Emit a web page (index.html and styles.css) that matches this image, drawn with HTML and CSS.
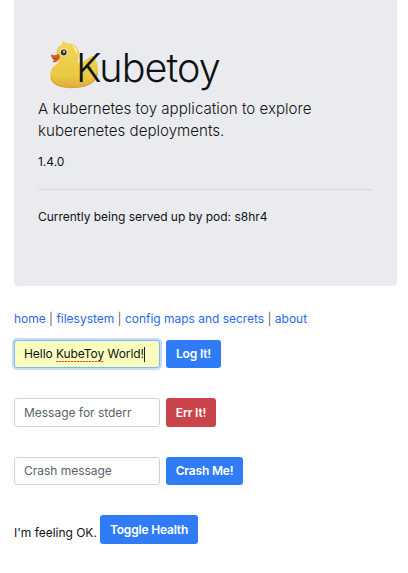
FILE: index.html
```html
<!DOCTYPE html>
<html lang="en">
<head>
<meta charset="utf-8">
<title>Kubetoy</title>
<link rel="stylesheet" href="styles.css">
</head>
<body>
<main class="container">
  <header class="jumbotron">
    <h1 class="title">
      <svg class="duck" viewBox="0 0 50 48" aria-hidden="true">
        <defs>
          <linearGradient id="body" x1="0" y1="0" x2="0" y2="1">
            <stop offset="0" stop-color="#f3d65a"/>
            <stop offset=".75" stop-color="#eac943"/>
            <stop offset="1" stop-color="#e0aa3c"/>
          </linearGradient>
        </defs>
        <path fill="url(#body)" d="M12 1c1.500-1.500 3-.5 3.500 1.500C23 1 29 6 29 13c0 4-2 6-1 9 4 2 8-5 14-7 3 0 6 7 6 14C48 41 38 47 22 47 8 47 .5 42 .5 34.500 0 28 4 24 8.500 22 5 15 5 6 12.500 3z"/>
        <path fill="none" stroke="#dda23b" stroke-width="1.300" d="M1 36c1 7.500 9 10.500 21 10.500 15 0 24-5 25.500-15"/>
        <path fill="#fff5b4" d="M22 4c4 2 6 6 5 10-1-4-3-7-5-10z"/>
        <circle cx="13.700" cy="11.500" r="3.700" fill="#faf6d5"/>
        <circle cx="13.700" cy="11.500" r="3" fill="#35332d"/>
        <circle cx="14" cy="10.800" r="1" fill="#fff"/>
        <path fill="#cf602d" d="M1 13.500c3 1 5 1 7-.5 2.500 0 2.500 5 0 6-1 2-4 3-5.500 2l1.500-2c-2-1-3-3-3-5.500z"/>
        <path fill="none" stroke="#a5451f" stroke-width="1" d="M3 17.500c2 .5 4 .5 5-.5"/>
      </svg>
      <span class="name">Kubetoy</span>
    </h1>
    <p class="lead">A kubernetes toy application to explore<br>kuberenetes deployments.</p>
    <p class="version">1.4.0</p>
    <hr class="rule">
    <p class="pod">Currently being served up by pod: s8hr4</p>
  </header>
  <nav class="links"><a href="#">home</a> | <a href="#">filesystem</a> | <a href="#">config maps and secrets</a> | <a href="#">about</a></nav>
  <form class="row">
    <div class="field focused"><span>Hello <span class="misspelt">KubeToy</span> World!</span><i class="caret"></i></div>
    <button class="btn log" type="button">Log It!</button>
  </form>
  <form class="row tall">
    <input class="field" placeholder="Message for stderr">
    <button class="btn danger" type="button">Err It!</button>
  </form>
  <form class="row">
    <input class="field" placeholder="Crash message">
    <button class="btn crash" type="button">Crash Me!</button>
  </form>
  <form class="row health">
    <span class="status">I'm feeling OK.</span>
    <button class="btn toggle" type="button">Toggle Health</button>
  </form>
</main>
</body>
</html>
```
FILE: styles.css
```css
* { box-sizing: border-box; }
body {
  margin: 0;
  background: #fff;
  color: #101215;
  font: 12px/18px Inter, "Liberation Sans", sans-serif;
  letter-spacing: -.02px;
}
.container { width: 383px; margin-left: 14px; }
.jumbotron {
  height: 286px;
  padding: 40px 24px 0;
  background: #eaebef;
  border-radius: 0 0 4px 4px;
}
.title {
  display: flex;
  height: 48px;
  margin: 0 0 10px;
  font-size: 39.500px;
  font-weight: 300;
  line-height: 56px;
  letter-spacing: -.900px;
}
.duck { width: 50px; height: 48px; margin: 1px 0 0 12px; flex: none; }
.name { margin-left: -24px; position: relative; }
.lead {
  margin: 0 0 11px;
  font-size: 15.100px;
  font-weight: 300;
  line-height: 22px;
  letter-spacing: .01px;
  white-space: nowrap;
}
.version, .pod { margin: 0; }
.rule { height: 1px; margin: 18px 0; border: 0; background: #d5d8dc; }
.links { height: 18px; margin: 24px 0 12px; color: #6b6762; white-space: nowrap; }
.links a { color: #2c69ed; text-decoration: none; }
.row { display: flex; gap: 6px; height: 28px; margin: 0 0 30.400px; }
.tall { height: 29px; margin-bottom: 29.400px; }
.field {
  width: 146px;
  height: 100%;
  padding: 0 9px;
  border: 1px solid #ced2da;
  border-radius: 3px;
  background: #fff;
  color: #101215;
  font: inherit;
  letter-spacing: inherit;
}
.field::placeholder { color: #596269; opacity: 1; }
.focused {
  display: flex;
  align-items: center;
  border-color: #85b7f5;
  background: #faffbd;
  box-shadow: 0 0 0 2px #c5dcff;
  letter-spacing: -.06px;
  white-space: nowrap;
}
.misspelt {
  padding-bottom: 1px;
  background: repeating-linear-gradient(90deg, #f0432f 0 2px, #f7c79a 2px 3px) 0 100% / 100% 1.500px no-repeat;
}
.caret { width: 1px; height: 15px; background: #222; }
.btn {
  height: 100%;
  padding: 0;
  border: 0;
  border-radius: 3px;
  background: #307cf6;
  color: #fff;
  font: 600 12px/28px Inter, "Liberation Sans", sans-serif;
  letter-spacing: -.18px;
}
.log { width: 55px; }
.danger { width: 50px; background: #ca444b; }
.crash { width: 77px; }
.health { gap: 4px; }
.status { width: 82px; padding-top: 9px; white-space: nowrap; }
.toggle { width: 98px; height: 29px; }
```
